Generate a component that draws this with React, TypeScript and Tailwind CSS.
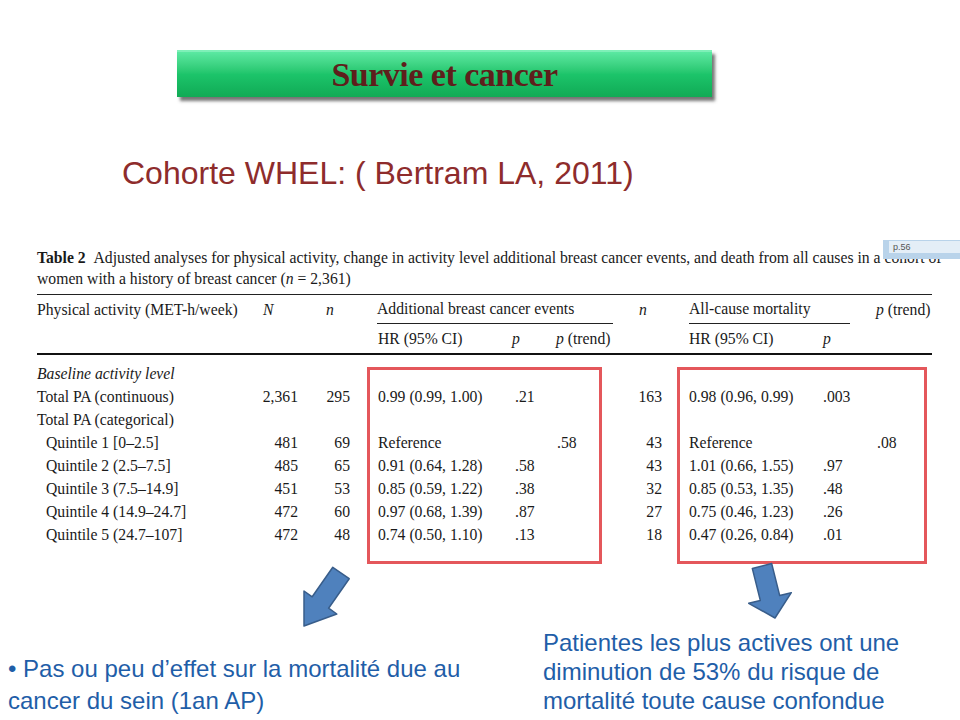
const rows = [
  { label: "Total PA (continuous)", N: "2,361", n: "295", hr: "0.99 (0.99, 1.00)", p: ".21", t: "", n2: "163", hr2: "0.98 (0.96, 0.99)", p2: ".003", t2: "" },
  { label: "Total PA (categorical)", N: "", n: "", hr: "", p: "", t: "", n2: "", hr2: "", p2: "", t2: "" },
  { label: "Quintile 1 [0–2.5]", sub: true, N: "481", n: "69", hr: "Reference", p: "", t: ".58", n2: "43", hr2: "Reference", p2: "", t2: ".08" },
  { label: "Quintile 2 (2.5–7.5]", sub: true, N: "485", n: "65", hr: "0.91 (0.64, 1.28)", p: ".58", t: "", n2: "43", hr2: "1.01 (0.66, 1.55)", p2: ".97", t2: "" },
  { label: "Quintile 3 (7.5–14.9]", sub: true, N: "451", n: "53", hr: "0.85 (0.59, 1.22)", p: ".38", t: "", n2: "32", hr2: "0.85 (0.53, 1.35)", p2: ".48", t2: "" },
  { label: "Quintile 4 (14.9–24.7]", sub: true, N: "472", n: "60", hr: "0.97 (0.68, 1.39)", p: ".87", t: "", n2: "27", hr2: "0.75 (0.46, 1.23)", p2: ".26", t2: "" },
  { label: "Quintile 5 (24.7–107]", sub: true, N: "472", n: "48", hr: "0.74 (0.50, 1.10)", p: ".13", t: "", n2: "18", hr2: "0.47 (0.26, 0.84)", p2: ".01", t2: "" },
];

const cols = "grid grid-cols-[213px_48px_52px_162px_44px_57px_49px_161px_53px_56px]";

export default function App() {
  return (
    <div className="relative w-[960px] h-[720px] bg-white overflow-hidden flex flex-col">
      {/* green title banner */}
      <div className="ml-[177px] mt-[50px] w-[535px] h-[47px] flex items-center justify-center bg-gradient-to-b from-[#5be8a2] via-[#1cc46a] to-[#10aa55] border-t-2 border-[#7ff0b8] shadow-[3px_4px_3px_rgba(60,60,60,0.7)]">
        <span className="font-['Liberation_Serif',serif] font-bold text-[34px] leading-none text-[#5e1f1c] -tracking-[0.5px]">Survie et cancer</span>
      </div>

      <h1 className="ml-[122px] mt-[58px] font-['Liberation_Sans',Arial,sans-serif] text-[32px] leading-[36px] text-[#8e2c2c]">
        Cohorte WHEL: ( Bertram LA, 2011)
      </h1>

      {/* table */}
      <div className="relative ml-[37px] mt-[56px] w-[895px] font-['Liberation_Serif',serif] text-[15.7px] text-[#1a1a1a]">
        <p className="leading-[21px] whitespace-nowrap">
          <b>Table 2</b>&nbsp;&nbsp;Adjusted analyses for physical activity, change in activity level additional breast cancer events, and death from all causes in a cohort of
          <br />
          women with a history of breast cancer (<i>n</i> = 2,361)
        </p>
        <div className="mt-[5px] border-t border-[#222]" />
        <div className={`${cols} h-[29px] items-stretch`}>
          <div className="flex items-center">Physical activity (MET-h/week)</div>
          <div className="flex items-center pl-[13px] italic">N</div>
          <div className="flex items-center pl-[28px] italic">n</div>
          <div className="col-span-3 ml-[27px] flex items-center border-b border-[#222]">Additional breast cancer events</div>
          <div className="flex items-center pl-[26px] italic">n</div>
          <div className="col-span-2 ml-[27px] mr-[26px] flex items-center border-b border-[#222]">All-cause mortality</div>
          <div className="flex items-center"><i>p</i>&nbsp;(trend)</div>
        </div>
        <div className={`${cols} h-[29px] items-center`}>
          <div />
          <div />
          <div />
          <div className="pl-[28px]">HR (95% CI)</div>
          <div className="italic">p</div>
          <div><i>p</i>&nbsp;(trend)</div>
          <div />
          <div className="pl-[27px]">HR (95% CI)</div>
          <div className="italic">p</div>
          <div />
        </div>
        <div className="h-[2px] bg-[#111]" />

        <div className="relative pt-[7px]">
          <div className="h-[23px] flex items-center italic">Baseline activity level</div>
          {rows.map((r) => (
            <div key={r.label} className={`${cols} h-[23px] items-center`}>
              <div className={r.sub ? "pl-[9px]" : ""}>{r.label}</div>
              <div className="text-right">{r.N}</div>
              <div className="text-right">{r.n}</div>
              <div className="pl-[28px]">{r.hr}</div>
              <div className="pl-[3px]">{r.p}</div>
              <div className="pl-[1px]">{r.t}</div>
              <div className="text-right">{r.n2}</div>
              <div className="pl-[27px]">{r.hr2}</div>
              <div>{r.p2}</div>
              <div className="pl-[1px]">{r.t2}</div>
            </div>
          ))}
          {/* highlight boxes */}
          <div className="absolute left-[330px] top-[12px] w-[235px] h-[197px] border-[3px] border-[#e4575b]" />
          <div className="absolute left-[640px] top-[12px] w-[250px] h-[197px] border-[3px] border-[#e4575b]" />
        </div>
      </div>

      {/* bottom notes */}
      <div className="flex font-['Liberation_Sans',Arial,sans-serif] text-[24px] text-[#1f5ea8]">
        <p className="w-[543px] pl-[8px] pt-[107px] leading-[32px]">
          • Pas ou peu d’effet sur la mortalité due au
          <br />
          cancer du sein (1an AP)
        </p>
        <p className="pt-[82px] leading-[29px]">
          Patientes les plus actives ont une
          <br />
          diminution de 53% du risque de
          <br />
          mortalité toute cause confondue
        </p>
      </div>

      {/* page-number tab */}
      <div className="absolute left-[883px] top-[240px] w-[77px] h-[19px] bg-[#b9d3ea] pl-[6px] pt-[1px]">
        <div className="h-[12px] bg-[#e4eef7] font-['Liberation_Sans',sans-serif] text-[9px] leading-[12px] text-[#555] pl-[4px]">p.56</div>
      </div>

      {/* arrows */}
      <svg className="absolute inset-0 pointer-events-none" width="960" height="720" viewBox="0 0 960 720">
        <polygon
          points="349.2,578.7 328.6,608.2 336.8,614 304,626 304,591 312.2,596.8 332.8,567.3"
          fill="#4f81bd"
          stroke="#385d8a"
          strokeWidth="1.5"
          strokeLinejoin="round"
        />
        <polygon
          points="752.3,568.4 760.3,600.4 748.7,603.3 775,618 791.3,592.7 779.7,595.6 771.7,563.6"
          fill="#4f81bd"
          stroke="#385d8a"
          strokeWidth="1.5"
          strokeLinejoin="round"
        />
      </svg>
    </div>
  );
}
